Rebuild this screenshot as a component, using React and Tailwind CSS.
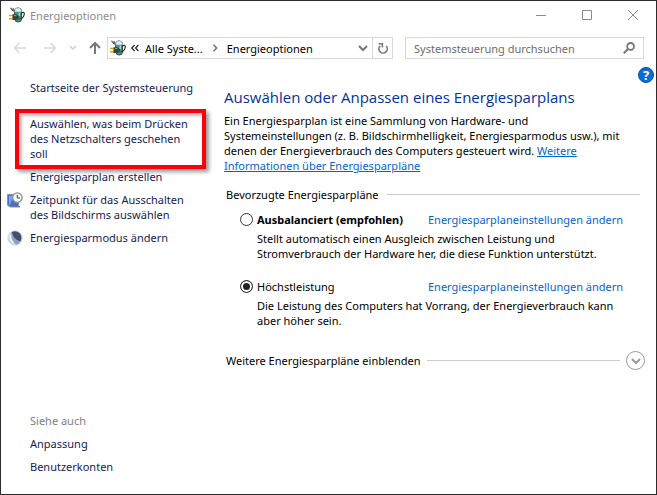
import React, { useState } from 'react';

function PowerIcon() {
    return (
        <svg width="16" height="16" viewBox="0 0 16 16" aria-hidden="true" className="shrink-0">
            <path d="M5.5 4.5 Q5.5 1 9 1 Q12.5 1 12.5 4.5 V12.5 Q12.5 15 9 15 Q6 15 6 12.5 Z" fill="#2f9a78" stroke="#3b4a4a" strokeWidth="1" />
            <path d="M5.5 5 Q5.5 0.8 9 0.8 Q12.5 0.8 12.5 5 Z" fill="#e6eef6" stroke="#8795a5" strokeWidth="0.8" />
            <path d="M9.5 5.5 H11 V9 H9.5 Z" fill="#8fe0c0" />
            <path d="M1.5 0.8 Q3 3.8 5.5 4.2 M4 0.8 L4.6 4" stroke="#4d524d" strokeWidth="1.1" fill="none" />
            <path d="M12.3 6 Q15.8 4.4 15.2 7.5 Q14.4 11.5 10.5 12" stroke="#2b2b2b" strokeWidth="1.2" fill="none" />
            <path d="M0 8.5 H4 M0 11.7 H4" stroke="#e0a80c" strokeWidth="1.4" />
            <path d="M3.5 7.2 H6.5 Q9.6 7.4 10.2 10 Q9.6 12.8 6.5 13 H3.5 Z" fill="#3c4042" />
            <path d="M5 8.6 H7.4" stroke="#9aa1a1" strokeWidth="1" />
        </svg>
    );
}

function DisplayTimeIcon() {
    return (
        <svg width="16" height="16" viewBox="0 0 16 16" aria-hidden="true">
            <path d="M0.5 2.5 H11.5 V14.5 H2 L0.5 13 Z" fill="#4a6fc9" stroke="#8794b8" />
            <path d="M2 4 H6 L3 13 H2 Z" fill="#7fa3ec" />
            <path d="M3 14.7 H13" stroke="#6c7895" strokeWidth="1.4" />
            <circle cx="10.3" cy="5.6" r="4.8" fill="#f3f5f4" stroke="#8b9194" strokeWidth="1.3" />
            <path d="M10.3 2.8 V6 H13" stroke="#3c4246" strokeWidth="1" fill="none" />
        </svg>
    );
}

function MoonIcon() {
    return (
        <svg width="16" height="16" viewBox="0 0 16 16" aria-hidden="true">
            <circle cx="8" cy="8" r="7.4" fill="#c9d3e4" stroke="#dfe5ee" strokeWidth="1" />
            <path d="M4.5 2.2 Q9 0 12.5 3 Q15.8 6.5 13.6 11.4 Q7 11 4.5 2.2 Z" fill="#434f68" />
            <path d="M4.5 2.2 Q6 9.5 13.6 11.4 Q12 14 9.5 14.4 Q3.5 11.5 4.5 2.2 Z" fill="#8ca0c4" />
            <path d="M3.2 5 Q3 10 6.5 13" stroke="#f2f6fb" strokeWidth="1.4" fill="none" />
        </svg>
    );
}

function Chevron({ className = '' }) {
    return (
        <svg width="10" height="10" viewBox="0 0 10 10" fill="none" stroke="currentColor" aria-hidden="true" className={className}>
            <path d="M1 3 L5 7 L9 3" strokeWidth="2" />
        </svg>
    );
}

function TitleBar() {
    return (
        <header className="flex h-7 items-center pl-2">
            <PowerIcon />
            <h1 className="flex-1 pl-[5px] text-[#8b8b8b]">Energieoptionen</h1>
            <div className="flex text-[#8a8a8a]">
                <button type="button" aria-label="Minimieren" className="flex h-7 w-[46px] items-center justify-center">
                    <svg width="10" height="10" viewBox="0 0 10 10" stroke="currentColor"><path d="M0 5.5 H10" /></svg>
                </button>
                <button type="button" aria-label="Maximieren" className="flex h-7 w-[46px] items-center justify-center">
                    <svg width="10" height="10" viewBox="0 0 10 10" fill="none" stroke="currentColor"><path d="M0.5 0.5 H9.5 V9.5 H0.5 Z" /></svg>
                </button>
                <button type="button" aria-label="Schließen" className="flex h-7 w-[46px] items-center justify-center">
                    <svg width="10" height="10" viewBox="0 0 10 10" stroke="currentColor"><path d="M0 0 L10 10 M10 0 L0 10" /></svg>
                </button>
            </div>
        </header>
    );
}

function NavBar() {
    return (
        <nav className="flex items-center pt-2 pr-3 pl-3">
            <button type="button" aria-label="Zurück" className="text-[#d9d9d9]">
                <svg width="14" height="12" viewBox="0 0 14 12" fill="none" stroke="currentColor" strokeWidth="1.6"><path d="M13 6 H1.5 M6.5 1 L1.5 6 L6.5 11" /></svg>
            </button>
            <button type="button" aria-label="Vorwärts" className="ml-4 text-[#d9d9d9]">
                <svg width="14" height="12" viewBox="0 0 14 12" fill="none" stroke="currentColor" strokeWidth="1.6"><path d="M1 6 H12.5 M7.5 1 L12.5 6 L7.5 11" /></svg>
            </button>
            <button type="button" aria-label="Verlauf" className="ml-3 text-[#d0d0d0]">
                <svg width="8" height="8" viewBox="0 0 8 8" fill="none" stroke="currentColor" strokeWidth="1.6"><path d="M1 2 L4 5 L7 2" /></svg>
            </button>
            <button type="button" aria-label="Nach oben" className="ml-3 text-[#777]">
                <svg width="12" height="14" viewBox="0 0 12 14" fill="none" stroke="currentColor" strokeWidth="2"><path d="M6 13 V2 M1 7 L6 2 L11 7" /></svg>
            </button>

            <div className="ml-1.5 flex h-[22px] min-w-0 flex-9 border border-[#d9d9d9]">
                <div className="flex min-w-0 flex-1 items-center pr-1 pl-0.5">
                    <PowerIcon />
                    <svg width="8" height="8" viewBox="0 0 8 8" fill="none" stroke="#222" strokeWidth="1.2" className="ml-[5px]" aria-hidden="true"><path d="M3.6 1 L0.8 4 L3.6 7 M7.4 1 L4.6 4 L7.4 7" /></svg>
                    <a href="#alle" className="ml-1.5 whitespace-nowrap">Alle Syste...</a>
                    <Chevron className="mx-2 size-2 -rotate-90 text-[#777]" />
                    <a href="#energie" className="flex-1 whitespace-nowrap">Energieoptionen</a>
                    <button type="button" aria-label="Vorherige Orte" className="text-[#777]"><Chevron /></button>
                </div>
                <button type="button" aria-label="Aktualisieren" className="flex w-5 items-center justify-center border-l border-[#d9d9d9] text-[#777]">
                    <svg width="12" height="12" viewBox="0 0 12 12" fill="none" stroke="currentColor" strokeWidth="1.6">
                        <path d="M9.2 4 A4.2 4.2 0 1 1 3.2 3.8 M1.6 1.8 H5.4 V5.4" />
                    </svg>
                </button>
            </div>

            <div className="ml-3 flex h-[22px] min-w-0 flex-7 items-center border border-[#d9d9d9] pr-2 pl-2">
                <input
                    type="text"
                    aria-label="Systemsteuerung durchsuchen"
                    placeholder="Systemsteuerung durchsuchen"
                    className="min-w-0 flex-1 outline-none placeholder:text-[#6d6d6d]"
                />
                <svg width="12" height="12" viewBox="0 0 12 12" fill="none" stroke="#777" aria-hidden="true">
                    <circle cx="7.6" cy="4.4" r="3.4" strokeWidth="1.8" />
                    <path d="M5.2 6.8 L0.8 11.2" strokeWidth="2" />
                </svg>
            </div>
        </nav>
    );
}

function SideLink({ icon, children }) {
    return (
        <li className="flex">
            <span className="w-[23px] shrink-0">{icon}</span>
            <a href="#task" className="hover:underline">{children}</a>
        </li>
    );
}

function Sidebar() {
    return (
        <aside className="flex w-[201px] shrink-0 flex-col pt-[21px] pb-5 pl-1.5 text-[#151c55]">
            <a href="#start" className="pl-[23px] whitespace-nowrap hover:underline">Startseite der Systemsteuerung</a>
            <ul className="mt-[21px] flex flex-col gap-2">
                <li className="relative pl-[23px]">
                    <a href="#netzschalter" className="hover:underline">
                        Auswählen, was beim Drücken<br />des Netzschalters geschehen<br />soll
                    </a>
                    <div className="pointer-events-none absolute -top-[7px] -right-1 -bottom-2 left-2 border-4 border-[#fb0007] shadow-[3px_3px_4px_rgba(0,0,0,0.4),inset_3px_3px_3px_rgba(0,0,0,0.25)]" />
                </li>
                <SideLink>Energiesparplan erstellen</SideLink>
                <SideLink icon={<DisplayTimeIcon />}>Zeitpunkt für das Ausschalten<br />des Bildschirms auswählen</SideLink>
                <SideLink icon={<MoonIcon />}>Energiesparmodus ändern</SideLink>
            </ul>
            <div className="mt-auto flex flex-col items-start gap-2 pl-[23px]">
                <h2 className="text-[#808080]">Siehe auch</h2>
                <a href="#anpassung" className="hover:underline">Anpassung</a>
                <a href="#konten" className="hover:underline">Benutzerkonten</a>
            </div>
        </aside>
    );
}

function PlanOption({ id, name, bold, selected, onSelect, children }) {
    return (
        <div className="pl-3.5">
            <div className="flex items-center">
                <input
                    type="radio"
                    id={id}
                    name="plan"
                    checked={selected}
                    onChange={() => onSelect(id)}
                    className="size-[13px] shrink-0 appearance-none rounded-full border border-[#333] bg-white checked:bg-[#222] checked:shadow-[inset_0_0_0_2px_#fff]"
                />
                <label htmlFor={id} className={`w-[175px] pl-1 whitespace-nowrap ${bold ? 'font-bold' : ''}`}>{name}</label>
                <a href="#einstellungen" className="whitespace-nowrap text-[#0066cc] hover:underline">Energiesparplaneinstellungen ändern</a>
            </div>
            <p className="mt-1 pl-[17px]">{children}</p>
        </div>
    );
}

function App() {
    const [plan, setPlan] = useState('hoch');

    return (
        <div className="flex min-h-screen flex-col border border-[#2b2b2b] bg-white font-['Noto_Sans',sans-serif] text-[11px] leading-[15px] text-black">
            <TitleBar />
            <NavBar />
            <div className="relative flex flex-1">
                <Sidebar />
                <button type="button" aria-label="Hilfe" className="absolute top-2 right-0.5 size-4 rounded-full border border-[#0a4f9e] bg-[#0a6cd6] text-[13px] leading-[14px] font-bold text-white">?</button>
                <main className="min-w-0 flex-1 pt-7 pr-4 pl-[22px]">
                    <h2 className="font-['Open_Sans',sans-serif] text-[15px] leading-5 whitespace-nowrap text-[#003399]">Auswählen oder Anpassen eines Energiesparplans</h2>
                    <p className="mt-1.5 whitespace-nowrap">
                        Ein Energiesparplan ist eine Sammlung von Hardware- und<br />
                        Systemeinstellungen (z. B. Bildschirmhelligkeit, Energiesparmodus usw.), mit<br />
                        denen der Energieverbrauch des Computers gesteuert wird.{' '}
                        <a href="#info" className="text-[#0066cc] underline">Weitere<br />Informationen über Energiesparpläne</a>
                    </p>
                    <div className="mt-3.5 flex items-center gap-2 pl-0.5">
                        <h3>Bevorzugte Energiesparpläne</h3>
                        <div className="h-px flex-1 bg-[#cccccc]" />
                    </div>
                    <div className="mt-2.5 flex flex-col gap-[18px] pl-0.5">
                        <PlanOption id="balance" name="Ausbalanciert (empfohlen)" bold selected={plan === 'balance'} onSelect={setPlan}>
                            Stellt automatisch einen Ausgleich zwischen Leistung und<br />Stromverbrauch der Hardware her, die diese Funktion unterstützt.
                        </PlanOption>
                        <PlanOption id="hoch" name="Höchstleistung" selected={plan === 'hoch'} onSelect={setPlan}>
                            Die Leistung des Computers hat Vorrang, der Energieverbrauch kann<br />aber höher sein.
                        </PlanOption>
                    </div>
                    <div className="mt-[23px] -mr-[5px] flex items-center gap-1.5 pl-0.5">
                        <h3>Weitere Energiesparpläne einblenden</h3>
                        <div className="h-px flex-1 bg-[#cccccc]" />
                        <button type="button" aria-label="Weitere Energiesparpläne einblenden" className="flex size-[19px] items-center justify-center rounded-full border border-[#999] text-[#999]">
                            <Chevron />
                        </button>
                    </div>
                </main>
            </div>
        </div>
    );
}

export default App;
